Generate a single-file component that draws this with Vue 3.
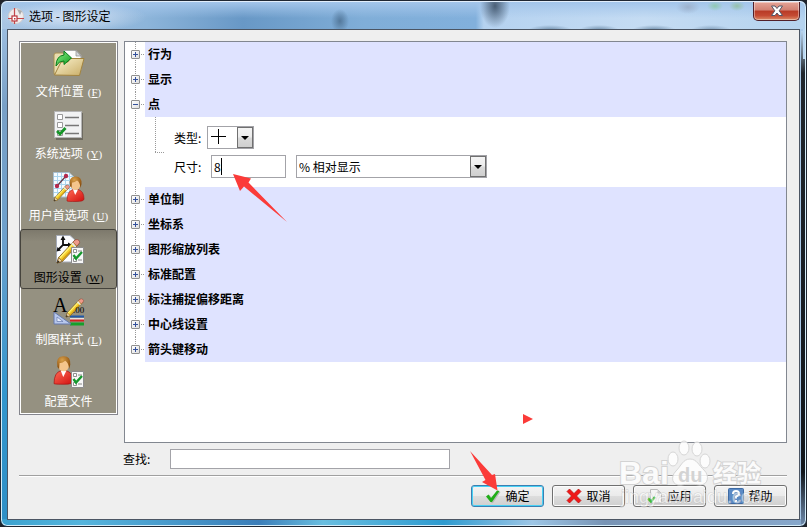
<script setup>
import { ref } from 'vue'

const pages = [
  { id: 'files', label: '文件位置', key: 'F' },
  { id: 'system', label: '系统选项', key: 'Y' },
  { id: 'user', label: '用户首选项', key: 'U' },
  { id: 'drawing', label: '图形设置', key: 'W' },
  { id: 'styles', label: '制图样式', key: 'L' },
  { id: 'profile', label: '配置文件', key: '' },
]
const current = ref('drawing')

const sections = ref([
  { title: '行为', open: false },
  { title: '显示', open: false },
  { title: '点', open: true },
  { title: '单位制', open: false },
  { title: '坐标系', open: false },
  { title: '图形缩放列表', open: false },
  { title: '标准配置', open: false },
  { title: '标注捕捉偏移距离', open: false },
  { title: '中心线设置', open: false },
  { title: '箭头键移动', open: false },
])
const size = ref('8')
const search = ref('')
</script>

<template>
  <div class="window">
    <svg class="defs" width="0" height="0" aria-hidden="true">
      <defs>
        <linearGradient id="folder" x1="0" y1="0" x2="1" y2="1">
          <stop offset="0" stop-color="#fbf3cf" /><stop offset="1" stop-color="#c9ad66" />
        </linearGradient>
        <linearGradient id="green" x1="0" y1="0" x2="1" y2="1">
          <stop offset="0" stop-color="#8df08a" /><stop offset="1" stop-color="#0c9c1c" />
        </linearGradient>
        <linearGradient id="red" x1="0" y1="0" x2="1" y2="1">
          <stop offset="0" stop-color="#ff6a55" /><stop offset="1" stop-color="#d00f0f" />
        </linearGradient>
        <radialGradient id="hair" cx=".4" cy=".3" r=".7">
          <stop offset="0" stop-color="#d9a04a" /><stop offset="1" stop-color="#8a4d0c" />
        </radialGradient>
        <g id="pencil">
          <path d="M0 0 1.500-5 16.500-21 20-17.500 5-1.500Z" fill="#f5cf2c" stroke="#75551a" stroke-width=".8" />
          <path d="M2.500-4.500 16.500-19.500" stroke="#fff27a" stroke-width="1.300" />
          <path d="M4.500-2.500 18.500-17.500" stroke="#cf9412" stroke-width="1" />
          <path d="M14.500-19 16.500-21Q18.500-22 20-20.500T20-17.500L18-15.500Z" fill="#ef9a8a" stroke="#8a4a3a" stroke-width=".6" />
          <path d="M13.500-18 17-14.500" stroke="#e6e6e6" stroke-width="1.600" />
          <path d="M0 0 1.500-5 5-1.500Z" fill="#f4d9a8" stroke="#6b4a1a" stroke-width=".6" />
          <path d="M0 0 .8-2.400 2.400-.8Z" fill="#222" />
        </g>
        <g id="person">
          <path d="M-8 14Q-8 4-2 2.500L0 5 3 2.500Q9 4 9 12 9 14.500 1 14.500T-8 14Z" fill="url(#red)" stroke="#a31111" stroke-width=".6" />
          <path d="M-2 2.500.2 8 3 2.500Z" fill="#fff" />
          <ellipse cx=".5" cy="-3" rx="5" ry="6" fill="#f5c58c" />
          <path d="M-5-1Q-7-10 0-10.500 7-11 6.500-3L5.500 1Q5-5 2-6.500-1-4-3-4.500L-3.500 1Z" fill="url(#hair)" />
        </g>
        <g id="checklist">
          <path d="M.5.5H12.500V16.500H.5Z" fill="#f7f7f7" stroke="#8d8d8d" />
          <path d="M2.500 2.500h3v3h-3zM2.500 11.500h3v3h-3z" fill="#fff" stroke="#777" stroke-width=".8" />
          <path d="M7 4h4M7 13h4" stroke="#888" />
          <path d="M2.500 8 5 11.500 11 5" fill="none" stroke="#16982d" stroke-width="2.400" />
        </g>
      </defs>
    </svg>

    <header class="titlebar">
      <svg class="app-icon" viewBox="0 0 16 16" aria-hidden="true">
        <circle cx="8" cy="8" r="7.500" fill="#f0eded" stroke="#d2cccc" />
        <path d="M9 1 14 3 12 7Z" fill="#aaa" />
        <path d="M6.500 0V16M0 10.500H16" stroke="#c4484c" stroke-width="1.200" />
        <rect x="4" y="8" width="5" height="5" fill="#fff" stroke="#b9363c" stroke-width="1.200" />
        <rect x="6" y="10" width="1.500" height="1.500" fill="#b9363c" />
      </svg>
      <h1>选项 - 图形设定</h1>
      <button class="close" type="button" aria-label="关闭">
        <svg viewBox="0 0 14 12" aria-hidden="true">
          <path d="M1.500 1H5L7 3.500 9 1H12.500L9.200 5.800 12.500 10.500H9L7 8 5 10.500H1.500L4.800 5.800Z" fill="#fff" stroke="#535666" />
        </svg>
      </button>
    </header>

    <main class="client">
      <div class="body">
        <nav class="pages">
          <button
            v-for="p in pages" :key="p.id" type="button" class="page"
            :class="{ active: p.id === current }" @click="current = p.id"
          >
            <svg class="page-icon" viewBox="0 0 32 32" aria-hidden="true">
              <g v-if="p.id === 'files'">
                <path d="M1 26V7Q1 5 3 5H10L12 7H17V26Z" fill="#e9dcae" stroke="#a88f52" />
                <path d="M11 2.500H23L28 7.500V22H11Z" fill="#fdfdfd" stroke="#a9a9a9" />
                <path d="M23 2.500V8H28Z" fill="#d5d8dc" stroke="#8e8e8e" stroke-width=".7" />
                <path d="M1.500 27 8 14H15L17 10.500H31L26.500 27.500Z" fill="url(#folder)" stroke="#a3843f" />
                <path d="M3 18Q3 8 11 7V3L18.500 10 11 16.500V13Q6 12.500 3 18Z" fill="url(#green)" stroke="#087c1a" />
              </g>
              <g v-else-if="p.id === 'system'">
                <rect x="3" y="3" width="27" height="27" fill="#6d6a60" />
                <rect x="1.500" y="1.500" width="27" height="26" fill="#f1f2f3" stroke="#b5b5b5" />
                <path d="M4.500 4.500h5v5h-5zM4.500 12.500h5v5h-5zM4.500 20.500h5v5h-5z" fill="#fff" stroke="#999" />
                <path d="M12 7.500H26M12 15.500H26M12 23.500H26" stroke="#777" stroke-width="1.300" />
                <path d="M4 21 7 24 12.500 18" fill="none" stroke="#149427" stroke-width="2.800" />
              </g>
              <g v-else-if="p.id === 'user'">
                <path d="M.5.500H16L21 5V25H.5Z" fill="#f5fbff" stroke="#a7bed0" />
                <path d="M4.500 1V25M8.500 1V25M12.500 1V25M16.500 1V25M1 4.500H20M1 8.500H20M1 12.500H20M1 16.500H20M1 20.500H20" stroke="#a9d5ef" />
                <path d="M4 14 13 4" stroke="#5e3444" stroke-width="1.200" />
                <circle cx="4" cy="14" r="2.200" fill="#b32a4e" /><circle cx="13" cy="4" r="2.200" fill="#b32a4e" />
                <use href="#person" x="22" y="15" />
                <use href="#pencil" transform="translate(1 29) scale(.75)" />
              </g>
              <g v-else-if="p.id === 'drawing'">
                <path d="M3.500 1.500H17L22 6V28H3.500Z" fill="#fbfcff" stroke="#a5abb8" />
                <path d="M10 4V11L5 16M10 11H17" fill="none" stroke="#111" stroke-width="1.800" />
                <path d="M10 1.500 12.500 6H7.500ZM3.500 17.500 4.500 13 8 16.500ZM19.500 11 15 8.500V13.500Z" fill="#111" />
                <use href="#pencil" transform="translate(4 29) scale(1.100)" />
                <use href="#checklist" x="18" y="13" />
              </g>
              <g v-else-if="p.id === 'styles'">
                <path d="M17 20.500H31" stroke="#2158a8" stroke-width="2" />
                <path d="M17 23H31" stroke="#fff" stroke-width="1.500" />
                <path d="M17 24.500H31" stroke="#d22020" stroke-width="2" />
                <path d="M17 28H31" stroke="#15a02a" stroke-width="3" />
                <path d="M1 16 18 28H1Z" fill="#b8c8ec" stroke="#6479ad" />
                <path d="M4 21 10 25.500H4Z" fill="#e8eefc" stroke="#6479ad" stroke-width=".7" />
                <text class="glyph-a" x="0" y="16">A</text>
                <use href="#pencil" transform="translate(13 21) scale(.85)" />
                <text class="glyph-num" x="20" y="17">.00</text>
              </g>
              <g v-else>
                <use href="#person" transform="translate(10 10) scale(1.120)" />
                <use href="#checklist" x="18" y="13" />
              </g>
            </svg>
            <span class="page-label">{{ p.label }}<span v-if="p.key" class="hotkey">(<u>{{ p.key }}</u>)</span></span>
          </button>
        </nav>

        <div class="tree">
          <section v-for="s in sections" :key="s.title" class="section">
            <div class="row">
              <div class="gutter">
                <button type="button" class="toggle" :aria-label="s.title" :aria-expanded="s.open" @click="s.open = !s.open">
                  <svg viewBox="0 0 9 9" aria-hidden="true">
                    <path d="M2 4.500H7" stroke="#34519c" />
                    <path v-if="!s.open" d="M4.500 2V7" stroke="#34519c" />
                  </svg>
                </button>
              </div>
              <h2>{{ s.title }}</h2>
            </div>
            <div v-if="s.open" class="details">
              <div class="branch"></div>
              <div class="fields">
                <div class="field">
                  <label for="kind">类型:</label>
                  <div class="combo kind">
                    <select id="kind"><option aria-label="十字"></option></select>
                    <svg class="cross" viewBox="0 0 15 15" aria-hidden="true"><path d="M0 7.500H15M7.500 0V15" stroke="#000" /></svg>
                    <span class="drop"></span>
                  </div>
                </div>
                <div class="field">
                  <label for="size">尺寸:</label>
                  <div class="size">
                    <input id="size" v-model="size" type="text">
                    <span class="caret"></span>
                    <svg class="pointer" viewBox="0 0 54 49" aria-hidden="true">
                      <path d="M0 0 18 4.500 15.500 8.500 54 48 11 12.500 7 17Z" fill="#fb3b39" />
                    </svg>
                  </div>
                  <div class="combo unit">
                    <select aria-label="尺寸单位"><option>% 相对显示</option></select>
                    <span class="drop"></span>
                  </div>
                </div>
              </div>
            </div>
          </section>
          <span class="marker"></span>
        </div>
      </div>

      <div class="search">
        <label for="search">查找:</label>
        <input id="search" v-model="search" type="text">
      </div>

      <footer class="actions">
        <button type="button" class="action primary">
          <svg viewBox="0 0 16 16" aria-hidden="true">
            <path d="M2 9 4.500 7 7 10.500 13 3 15.500 4 8 15H6.500Z" fill="#bbb" />
            <path d="M1 8.500 3.500 6.500 6 10 12 2.500 14.500 3 7 14H5.500Z" fill="#20ae18" />
          </svg>
          确定
          <svg class="pointer-ok" viewBox="0 0 28 40" aria-hidden="true">
            <path d="M0 0 22 24 25 23 27.500 39.500 12 31 15.500 29Z" fill="#fb3b39" />
          </svg>
        </button>
        <button type="button" class="action">
          <svg viewBox="0 0 16 16" aria-hidden="true">
            <path d="M1 3.500 3.500 1 8 5.500 12.500 1 15 3.500 10.500 8 15 12.500 12.500 15 8 10.500 3.500 15 1 12.500 5.500 8Z" fill="#f01818" stroke="#b60d0d" stroke-width=".7" />
          </svg>
          取消
        </button>
        <button type="button" class="action">
          <svg viewBox="0 0 16 16" aria-hidden="true">
            <path d="M3.500 1.500H10.500L14.500 5.500V15H3.500Z" fill="#f5f5f5" stroke="#b9b9b9" />
            <path d="M10.500 1.500V5.500H14.500Z" fill="#ccc" />
            <path d="M1 10.500 4 13.500 8 9" fill="none" stroke="#42bd35" stroke-width="2.500" />
          </svg>
          应用
        </button>
        <button type="button" class="action">
          <svg viewBox="0 0 16 16" aria-hidden="true">
            <rect x=".5" y=".5" width="15" height="15" rx="1" fill="#5b8ac5" stroke="#3e6ba4" />
            <path d="M5 6Q5 3 8 3T11 6Q11 7.500 8 8.500V10.500" fill="none" stroke="#fff" stroke-width="2" />
            <rect x="7" y="12" width="2" height="2" fill="#fff" />
          </svg>
          帮助
        </button>

        <svg class="watermark" viewBox="0 0 150 72" aria-hidden="true">
          <g class="wm-shape">
            <ellipse cx="54" cy="18" rx="5" ry="7" />
            <ellipse cx="65" cy="7" rx="5" ry="7" />
            <ellipse cx="78" cy="8" rx="5" ry="7" />
            <ellipse cx="86" cy="20" rx="5" ry="7" />
            <path d="M71 18C78 18 80 25 85 29 91 35 89 44 81 44 75 43 67 43 62 44 53 45 51 36 57 30 62 25 64 18 71 18Z" />
          </g>
          <text class="wm-text wm-bai" x="0" y="43">Bai</text>
          <text class="wm-du" x="59" y="41">du</text>
          <text class="wm-text wm-cjk" x="94" y="41">经验</text>
          <text class="wm-url" x="2" y="62">jingyan.baidu.com</text>
        </svg>
      </footer>
    </main>
  </div>
</template>

<style>
body {
  margin: 0;
  background: #20242b;
}
</style>

<style scoped>
* {
  box-sizing: border-box;
}
.window {
  display: flex;
  flex-direction: column;
  min-height: 100vh;
  padding: 0 6px 6px 6px;
  border: 1px solid #1f2733;
  border-radius: 7px;
  box-shadow: inset 0 0 0 1px #d4edfa;
  font: 12px/16px "Noto Sans CJK SC", sans-serif;
  color: #000;
  background:
    linear-gradient(90deg, transparent 4px, #b9d7f2 4px) right 0 top 28px / 7px 30px no-repeat,
    linear-gradient(180deg, #b9d5ee 0, #20262d 8%, #10151b 84%, #7f9fc6 96%) right 0 top 30px / 5px 100% no-repeat,
    linear-gradient(90deg, #3ba2cf 0, #55b5dd 10%, #3b7eb9 32%, #69bee0 40%, #2e9bd0 55%, #9dc6e6 66%, #7894b5 75%, #87a8cc 100%) bottom / 100% 7px no-repeat,
    linear-gradient(180deg, #a8c7e8 0, #79a0c6 20%, #6da0cc 45%, #3296cd 75%, #2f8fc6 100%) left / 7px 100% no-repeat,
    #a9c9e9;
}
.defs {
  position: absolute;
}
.titlebar {
  display: flex;
  align-items: center;
  height: 28px;
  margin: 0 -5px;
  padding: 0 0 0 6px;
  border-top: 1px solid #e2eefb;
  border-radius: 6px 6px 0 0;
  background:
    radial-gradient(ellipse 9px 12px at 338px 19px, #54799c, transparent),
    radial-gradient(ellipse 15px 22px at 493px 4px, #4a5f76, transparent),
    radial-gradient(ellipse 12px 7px at 686px 5px, #9db2cd, transparent),
    radial-gradient(ellipse 8px 5px at 713px 4px, #8fc9b1, transparent),
    radial-gradient(ellipse 8px 5px at 735px 4px, #95c1a9, transparent),
    radial-gradient(ellipse 22px 5px at 548px 28px, #6e8daa, transparent),
    radial-gradient(ellipse 20px 5px at 597px 28px, #6e8daa, transparent),
    radial-gradient(ellipse 22px 5px at 652px 28px, #6e8daa, transparent),
    radial-gradient(ellipse 20px 5px at 709px 28px, #7d9ab6, transparent),
    radial-gradient(ellipse 75px 15px at 70px 15px, #d5e3f5, transparent),
    linear-gradient(180deg, #a3c5ea 0, transparent 60%),
    linear-gradient(90deg, #a8c5e3 0, #8db5da 18%, #6898c6 30%, #80aed8 45%, #82b0dc 59%, #b5d2f0 60%, #c5dcf3 80%, #b5d3ef 100%);
}
.app-icon {
  width: 16px;
  height: 16px;
  margin-right: 5px;
}
h1 {
  flex: 1;
  margin: 0;
  font-size: 12px;
  font-weight: 400;
}
.close {
  display: grid;
  place-items: center;
  align-self: flex-start;
  width: 47px;
  height: 19px;
  margin-right: 5px;
  padding: 0;
  border: 1px solid #51202a;
  border-top: 0;
  border-radius: 0 0 5px 5px;
  background: linear-gradient(180deg, #e5a598 0, #d18072 45%, #b83a26 50%, #c44a33 75%, #dc8c68 100%);
  box-shadow: inset 0 0 0 1px #ffffff66;
}
.close svg {
  width: 14px;
  height: 12px;
}
.client {
  display: flex;
  flex: 1;
  flex-direction: column;
  padding: 11px 12px 12px 11px;
  border: 1px solid #4b5563;
  background: #efefef;
}
.body {
  display: flex;
  flex: 1;
  align-items: flex-start;
  gap: 6px;
}
.pages {
  display: flex;
  flex: none;
  flex-direction: column;
  width: 99px;
  padding: 1px;
  border: 1px solid #84858d;
  background: #959181;
  box-shadow: inset 0 0 0 1px #fff;
}
.page {
  display: flex;
  flex-direction: column;
  align-items: center;
  gap: 3px;
  height: 62px;
  padding: 5px 0 0;
  border: 0;
  background: none;
  color: #fff;
  font: inherit;
}
.page:last-child {
  height: 60px;
}
.page.active {
  height: 60px;
  margin: 0 -1px 2px;
  padding-top: 4px;
  border: 1px solid #45433c;
  border-radius: 3px;
  background: linear-gradient(180deg, #7d796c 0, #8d897a 20%, #8d897a 100%);
  color: #000;
}
.page-icon {
  flex: none;
  width: 32px;
  height: 32px;
  overflow: visible;
}
.page-label {
  white-space: nowrap;
}
.hotkey {
  margin-left: 4px;
  font-family: "Liberation Serif", serif;
  font-size: 11px;
}
.glyph-a {
  font: 20px "Liberation Serif", serif;
  fill: #000;
}
.glyph-num {
  font: 9px "Liberation Serif", serif;
  fill: #000;
}
.tree {
  position: relative;
  flex: 1;
  align-self: stretch;
  border: 1px solid #828790;
  background: #fff;
}
.row {
  display: grid;
  grid-template-columns: 20px 1fr;
  height: 25px;
}
.gutter {
  display: flex;
  align-items: center;
  padding-left: 6px;
  background:
    repeating-linear-gradient(180deg, #999 0 1px, transparent 1px 2px) 10px 0 / 1px 100% no-repeat,
    repeating-linear-gradient(90deg, #999 0 1px, transparent 1px 2px) 14px 12px / 6px 1px no-repeat;
}
.section:last-of-type .gutter {
  background-size: 1px 12px, 6px 1px;
}
.toggle {
  width: 9px;
  height: 9px;
  padding: 0;
  border: 1px solid #8f8f8f;
  border-radius: 1px;
  background: linear-gradient(135deg, #fff, #dedede);
}
.toggle svg {
  display: block;
  width: 9px;
  height: 9px;
  margin: -1px;
}
h2 {
  margin: 0;
  padding-left: 3px;
  background: #dfe3ff;
  font-size: 12px;
  font-weight: 700;
  line-height: 24px;
}
.details {
  display: flex;
  gap: 10px;
  height: 70px;
  padding-left: 30px;
  background: repeating-linear-gradient(180deg, transparent 0 1px, #999 1px 2px) 10px 0 / 1px 100% no-repeat;
}
.branch {
  width: 9px;
  height: 36px;
  background:
    repeating-linear-gradient(180deg, #999 0 1px, transparent 1px 2px) 0 0 / 1px 100% no-repeat,
    repeating-linear-gradient(90deg, #999 0 1px, transparent 1px 2px) 0 100% / 100% 1px no-repeat;
}
.fields {
  display: flex;
  flex-direction: column;
  gap: 6px;
  padding-top: 9px;
}
.field {
  display: flex;
  align-items: center;
  height: 23px;
}
.field label {
  width: 33px;
}
.combo,
.size {
  position: relative;
  height: 23px;
}
.size {
  width: 75px;
  margin: 0 10px 0 4px;
}
.kind {
  width: 47px;
}
.unit {
  width: 191px;
}
input,
select {
  display: block;
  width: 100%;
  height: 100%;
  margin: 0;
  padding: 0 2px;
  border: 1px solid #a3a3a8;
  border-radius: 0;
  outline: 0;
  appearance: none;
  background: #fff;
  color: #000;
  font: inherit;
}
.cross {
  position: absolute;
  top: 3px;
  left: 4px;
  width: 15px;
  height: 15px;
}
.drop {
  position: absolute;
  top: 1px;
  right: 1px;
  bottom: 1px;
  width: 16px;
  border: 1px solid #707070;
  background: linear-gradient(180deg, #f4f4f4 0, #ececec 48%, #dadada 52%, #cfcfcf 100%);
  pointer-events: none;
}
.drop::after {
  position: absolute;
  top: 8px;
  left: 3px;
  border: 4px solid transparent;
  border-top-color: #000;
  border-bottom: 0;
  content: "";
}
.caret {
  position: absolute;
  top: 3px;
  left: 10px;
  width: 1px;
  height: 17px;
  background: #000;
}
.pointer {
  position: absolute;
  top: 19px;
  left: 22px;
  z-index: 2;
  width: 54px;
  height: 49px;
  pointer-events: none;
}
.marker {
  position: absolute;
  right: 253px;
  bottom: 18px;
  border: 5px solid transparent;
  border-right: 0;
  border-left: 10px solid #fb3b39;
}
.search {
  display: flex;
  align-items: center;
  height: 20px;
  margin: 6px 0;
  padding-left: 104px;
}
.search label {
  width: 47px;
}
.search input {
  width: 280px;
}
.actions {
  position: relative;
  display: flex;
  justify-content: flex-end;
  gap: 8px;
  padding-top: 9px;
  border-top: 1px solid #a0a0a0;
  box-shadow: inset 0 1px #fff;
}
.action {
  position: relative;
  display: flex;
  align-items: center;
  justify-content: center;
  gap: 4px;
  width: 73px;
  height: 22px;
  padding: 0;
  border: 1px solid #707070;
  border-radius: 3px;
  background: linear-gradient(180deg, #f3f3f3 0, #ebebeb 48%, #dddddd 52%, #cfcfcf 100%);
  box-shadow: inset 0 0 0 1px #fcfcfc;
  color: #000;
  font: inherit;
}
.action > svg {
  width: 16px;
  height: 16px;
}
.action.primary {
  border-color: #3c7fb1;
  box-shadow: inset 0 0 0 1px #48d1f5;
}
.action > .pointer-ok {
  position: absolute;
  top: -35px;
  left: -2px;
  width: 28px;
  height: 40px;
}
.watermark {
  position: absolute;
  top: -35px;
  right: 18px;
  width: 150px;
  height: 72px;
  overflow: visible;
  pointer-events: none;
}
.wm-shape {
  fill: #fff;
  fill-opacity: 0.8;
  stroke: #d6d6d6;
}
.wm-text {
  fill: #fbfbfb;
  stroke: #d3d3d3;
  stroke-width: 2px;
  paint-order: stroke;
}
.wm-bai {
  font: 700 32px "Liberation Sans", sans-serif;
}
.wm-du {
  font: 700 20px "Liberation Sans", sans-serif;
  fill: #d3d3d3;
}
.wm-cjk {
  font: 700 24px "Noto Sans CJK SC", sans-serif;
}
.wm-url {
  font: 18px "Liberation Sans", sans-serif;
  fill: #fff;
  stroke: #b4b4b4;
  stroke-width: 1px;
  paint-order: stroke;
  opacity: 0.5;
}
</style>
